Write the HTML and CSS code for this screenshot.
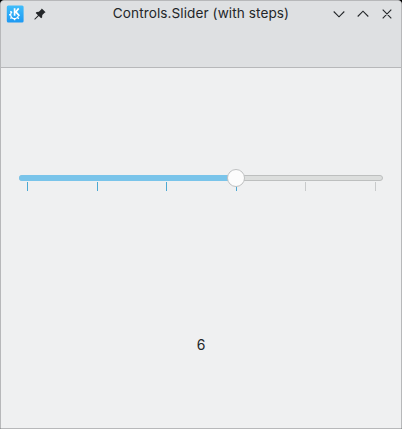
FILE: index.html
```html
<!DOCTYPE html>
<html lang="en">
<head>
<meta charset="utf-8">
<title>Controls.Slider (with steps)</title>
<link rel="stylesheet" href="styles.css">
</head>
<body>
<div class="window">
  <header class="header">
    <div class="titlebar">
      <div class="left">
        <svg class="logo" width="18" height="18" viewBox="0 0 18 18">
          <defs><linearGradient id="g" x1="0" y1="1" x2="0" y2="0"><stop offset="0" stop-color="#1d99f3"/><stop offset="1" stop-color="#40bdfa"/></linearGradient></defs>
          <rect x="0.8" y="0.5" width="16.8" height="17" rx="1.5" fill="url(#g)"/>
          <path d="M6.1 6.7A3.9 3.9 0 1 0 12.2 11.1" fill="none" stroke="#fff" stroke-width="1.2"/>
          <path d="M5.5 7.4 4.4 6.3M4.8 9.8H3.1M5.6 12.4 4.4 13.6M8.6 13.5V15.3M11.5 12.5 12.8 13.8" stroke="#fff" stroke-width="1.4"/>
          <path d="M8.6 3.2V10.8M12.7 3.4 9.8 6.9 13.4 10.9" fill="none" stroke="#fff" stroke-width="1.7"/>
        </svg>
        <svg class="pin" width="12" height="12" viewBox="0 0 12 12">
          <path d="M7.8.4 11.6 4.2 10.6 4.8 8.3 7.1 8.1 9.4 7.1 10.3 4.8 8 .9 11.7.3 11.1 4 7.2 1.7 4.9 2.6 3.9 4.9 3.7 7.2 1.4Z" fill="#232629"/>
        </svg>
      </div>
      <div class="title">Controls.Slider (with steps)</div>
      <svg class="buttons" width="60" height="12" viewBox="0 0 60 12">
        <path d="M.7 3.5 6 8.8 11.3 3.5M24.7 8.5 30 3.2 35.3 8.5M49.7 1.7 58.3 10.3M58.3 1.7 49.7 10.3" fill="none" stroke="#232629" stroke-width="1.1"/>
      </svg>
    </div>
  </header>
  <main class="content">
    <div class="slider">
      <div class="track"><div class="fill"></div></div>
      <div class="ticks"><i class="on"></i><i class="on"></i><i class="on"></i><i class="on"></i><i></i><i></i></div>
      <div class="handle"></div>
    </div>
    <div class="value">6</div>
  </main>
</div>
</body>
</html>
```
FILE: styles.css
```css
* { box-sizing: border-box; }
body { margin: 0; background: #000; font-family: Inter, "Noto Sans", sans-serif; color: #232629; }
.window {
  width: 402px; height: 429px; overflow: hidden;
  display: flex; flex-direction: column;
  background: #eff0f1; border: 1px solid #b7b8ba; border-radius: 4px 4px 0 0;
}
.header { height: 67px; background: #dee0e2; border-bottom: 1px solid #b7b8ba; }
.titlebar { display: grid; grid-template-columns: 1fr auto 1fr; align-items: center; height: 26px; }
.left { display: flex; align-items: center; gap: 10px; padding-left: 5px; }
.logo, .pin, .buttons { display: block; }
.title { width: 178px; height: 26px; font-size: 13.6px; letter-spacing: 0.08px; line-height: 24px; text-align: center; white-space: nowrap; }
.buttons { justify-self: end; margin-right: 8px; }
.content { flex: 1; display: flex; flex-direction: column; padding: 107px 18px 0; }
.slider { position: relative; height: 16px; }
.track { height: 6px; border: 1px solid #bdbfbf; border-radius: 3px; background: #dcdedd; }
.fill { width: 217px; height: 6px; margin: -1px; border-radius: 3px 0 0 3px; background: #79c4ea; }
.ticks { display: flex; justify-content: space-between; padding: 1px 7px 0 8px; }
.ticks i { width: 1px; height: 9px; background: #c8cacb; }
.ticks .on { background: #4ca9d3; }
.handle {
  position: absolute; left: 208px; top: -6px; width: 18px; height: 18px;
  border: 1px solid #bfc1c2; border-radius: 50%; background: #fcfcfc;
}
.value { margin-top: 144px; font-size: 14px; line-height: 20px; text-align: center; }
```
